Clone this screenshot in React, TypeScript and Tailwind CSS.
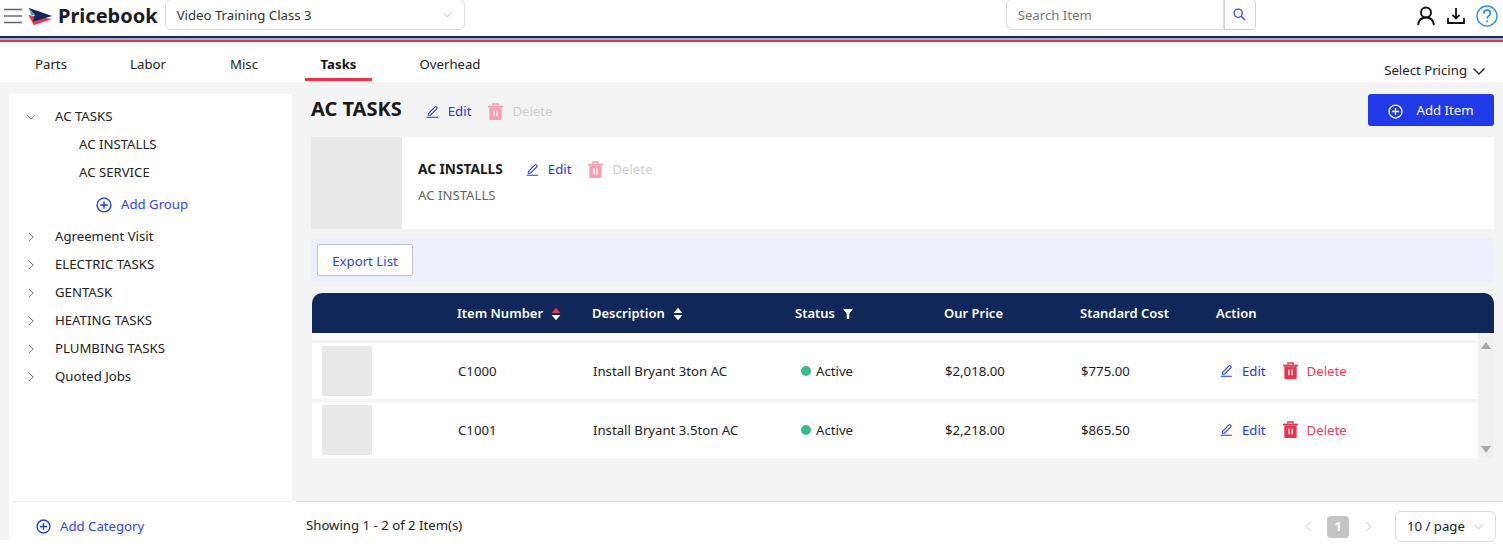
import React from "react";

const Pencil = ({ className = "" }: { className?: string }) => (
  <svg viewBox="0 0 14 14" className={"w-[13px] h-[13px] " + className} fill="none" stroke="#1f3ae6" strokeWidth="1.1">
    <path d="M2.6 9.2 9.6 2.1a1 1 0 0 1 1.5 0l.6.6a1 1 0 0 1 0 1.5L4.8 11H2.4z" strokeLinejoin="round" />
    <path d="M0.8 13.2h12" />
  </svg>
);

const Trash = ({ fill }: { fill: string }) => (
  <svg viewBox="0 0 14 16" className="w-[15px] h-[17px]">
    <path d="M4.5 2.5V1h5v1.5" fill="none" stroke={fill} strokeWidth="1.3" />
    <rect x="0" y="2.5" width="14" height="1.8" fill={fill} />
    <path fillRule="evenodd" d="M1.2 4.3h11.6V15a1 1 0 0 1-1 1H2.2a1 1 0 0 1-1-1zM5 7v5.500h1.300V7zM7.800 7v5.500h1.300V7z" fill={fill} />
  </svg>
);

const PlusCircle = ({ className = "", color = "#1f3ae6" }: { className?: string; color?: string }) => (
  <svg viewBox="0 0 16 16" className={className} fill="none" stroke={color} strokeWidth="1.4">
    <circle cx="8" cy="8" r="6.9" />
    <path d="M8 4.2v7.6M4.2 8h7.6" />
  </svg>
);

const Chevron = ({ dir, className = "", color = "#555", sw = 1.2 }: { dir: "down" | "right" | "left"; className?: string; color?: string; sw?: number }) => {
  const d = dir === "down" ? "M1.5 4.5 7 10l5.5-5.5" : dir === "right" ? "M4.5 1.5 10 7l-5.5 5.5" : "M9.5 1.5 4 7l5.5 5.5";
  return (
    <svg viewBox="0 0 14 14" className={className} fill="none" stroke={color} strokeWidth={sw}>
      <path d={d} />
    </svg>
  );
};

const Sorter = ({ up, down }: { up: string; down: string }) => (
  <svg viewBox="0 0 10 14" className="w-[10px] h-[14px] ml-[8px]">
    <path d="M5 0.8 9.4 6H0.6z" fill={up} />
    <path d="M5 13.2 9.4 8H0.6z" fill={down} />
  </svg>
);

const Tree = ({ open, label }: { open?: boolean; label: string }) => (
  <div className="flex items-center h-[28px]">
    <div className="w-[46px] pl-[17px]">
      <Chevron dir={open ? "down" : "right"} className="w-[10px] h-[10px]" />
    </div>
    <span>{label}</span>
  </div>
);

const columns = "grid grid-cols-[145px_135px_203px_149px_136px_136px_1fr]";

const Row = ({ num, desc, price, cost }: { num: string; desc: string; price: string; cost: string }) => (
  <div className={columns + " h-[56px] items-center bg-white text-[#222]"}>
    <div className="pl-[10px]">
      <div className="w-[50px] h-[50px] bg-[#e8e8e8]" />
    </div>
    <div className="pl-[1px] pt-[2px]">{num}</div>
    <div className="pl-[1px] pt-[2px]">{desc}</div>
    <div className="flex items-center pl-[6px]">
      <span className="w-[10px] h-[10px] rounded-full bg-[#35bb85] mr-[5px]" />
      <span className="pt-[2px]">Active</span>
    </div>
    <div className="pl-[1px] pt-[2px]">{price}</div>
    <div className="pl-[1px] pt-[2px]">{cost}</div>
    <div className="flex items-center pl-[4px]">
      <Pencil />
      <span className="ml-[9px] pt-[2px] text-[#2438e8]">Edit</span>
      <span className="ml-[17px]"><Trash fill="#e9344f" /></span>
      <span className="ml-[9px] pt-[2px] text-[#f0405a]">Delete</span>
    </div>
  </div>
);

const tabs: [string, string][] = [
  ["Parts", "w-[64px]"],
  ["Labor", "w-[70px]"],
  ["Misc", "w-[62px]"],
  ["Tasks", "w-[67px]"],
  ["Overhead", "w-[96px]"],
];

export default function App() {
  return (
    <div className="h-[551px] w-full flex flex-col overflow-hidden bg-white font-['Noto_Sans','Open_Sans',sans-serif] text-[13.2px] text-[#222]">
      <header className="h-[36px] flex items-center shrink-0 pb-[4px]">
        <svg viewBox="0 0 18 16" className="w-[18px] h-[16px] ml-[4px]" stroke="#666" strokeWidth="1.4">
          <path d="M0 1.5h18M0 8h18M0 14.5h18" />
        </svg>
        <svg viewBox="0 0 26 20" className="w-[25px] h-[20px] ml-[6px] mt-[1px]">
          <path d="M0.5 8 6 18.500 25 12z" fill="#f0364e" />
          <path d="M0.5 0.5 25 9 5 15 7 8z" fill="#10275a" />
          <path d="M0.5 0.5 7 8 3.500 8z" fill="#3ba0c8" />
        </svg>
        <span className="ml-[5px] text-[20px] font-bold text-[#1a1a2a] leading-none">Pricebook</span>
        <div className="ml-[7px] w-[300px] h-[31px] -mt-[3px] border border-[#dcdcdc] rounded-[6px] flex items-center justify-between pl-[11px] pr-[11px] text-[#333]">
          <span className="pt-[2px]">Video Training Class 3</span>
          <Chevron dir="down" className="w-[11px] h-[11px]" color="#bbb" />
        </div>
        <div className="ml-[541px] flex h-[31px] -mt-[3px]">
          <div className="w-[218px] border border-[#dcdcdc] rounded-l-[6px] pl-[11px] pt-[2px] flex items-center text-[#777]">Search Item</div>
          <div className="w-[32px] border border-[#d0d0d0] rounded-r-[4px] flex items-center justify-center">
            <svg viewBox="0 0 14 14" className="w-[13px] h-[13px]" fill="none" stroke="#2c4be0" strokeWidth="1.4">
              <circle cx="5.6" cy="5.6" r="4.4" />
              <path d="m8.800 8.800 4.200 4.200" />
            </svg>
          </div>
        </div>
        <svg viewBox="0 0 18 20" className="w-[18px] h-[20px] ml-[161px]" fill="none" stroke="#111" strokeWidth="1.9">
          <circle cx="9" cy="6.5" r="5" />
          <path d="M1 19c.6-4.500 3.600-7.500 8-7.500s7.400 3 8 7.500" />
        </svg>
        <svg viewBox="0 0 18 16" className="w-[18px] h-[16px] ml-[12px]" fill="none" stroke="#111" strokeWidth="1.8">
          <path d="M9 0v10M5.500 6.800 9 10.500l3.500-3.700M1 10v5h16v-5" />
        </svg>
        <svg viewBox="0 0 22 22" className="w-[22px] h-[22px] ml-[11px]" fill="none" stroke="#2f8ff0" strokeWidth="1.4">
          <circle cx="11" cy="11" r="10" />
          <path d="M7.800 8.500c0-2 1.400-3.300 3.300-3.300s3.200 1.300 3.200 3c0 2.600-3.200 2.600-3.200 5.200" strokeWidth="1.700" />
          <circle cx="11.100" cy="16.300" r="1" fill="#2f8ff0" stroke="none" />
        </svg>
      </header>

      <div className="shrink-0 h-[6px] flex flex-col">
        <div className="h-[2px] bg-[#10275a]" />
        <div className="h-[2px] bg-[#9cb4c4]" />
        <div className="h-[2px] bg-[#e8344e]" />
      </div>

      <nav className="h-[40px] shrink-0 flex pl-[19px] gap-[30px] text-[#222]">
        {tabs.map(([t, w]) => (
          <div
            key={t}
            className={
              w +
              " h-[39px] pt-[10px] flex items-center justify-center " +
              (t === "Tasks" ? "font-bold border-b-[3px] border-[#f0304a] text-[#111]" : "border-b-[3px] border-transparent")
            }
          >
            {t}
          </div>
        ))}
        <div className="ml-auto mr-[17px] mt-[20px] flex items-center h-[18px] text-[#222]">
          Select Pricing
          <Chevron dir="down" className="w-[14px] h-[14px] ml-[5px]" color="#222" sw={1.3} />
        </div>
      </nav>

      <div className="h-[469px] shrink-0 flex bg-white">
        <div className="w-[292px] h-[458px] shrink-0 bg-[#f4f4f4] pl-[9px] pt-[12px] flex">
          <aside className="flex-1 bg-white flex flex-col">
            <div className="pt-[9px] flex-1">
              <Tree open label="AC TASKS" />
              <div className="pl-[70px] h-[28px] flex items-center">AC INSTALLS</div>
              <div className="pl-[70px] h-[28px] flex items-center">AC SERVICE</div>
              <div className="pl-[87px] h-[36px] flex items-center text-[#2f49e8]">
                <PlusCircle className="w-[16px] h-[16px] mr-[9px]" />
                Add Group
              </div>
              {["Agreement Visit", "ELECTRIC TASKS", "GENTASK", "HEATING TASKS", "PLUMBING TASKS", "Quoted Jobs"].map((t) => (
                <Tree key={t} label={t} />
              ))}
            </div>
            <div className="ml-[3px] h-[39px] pt-[11px] border-t border-[#ececec] flex items-center pl-[24px] text-[#2f49e8]">
              <PlusCircle className="w-[15px] h-[15px] mr-[9px]" />
              Add Category
            </div>
          </aside>
        </div>

        <main className="flex-1 flex flex-col min-w-0 bg-[#f4f4f4]">
          <div className="flex-1 pt-[12px] pl-[19px] pr-[9px] flex flex-col">
            <div className="h-[32px] flex items-center">
              <h1 className="text-[20px] font-bold text-[#1a1a1a] -mt-[2px]">AC TASKS</h1>
              <span className="ml-[24px] pt-[3px]"><Pencil /></span>
              <span className="ml-[9px] pt-[4px] text-[#2438e8]">Edit</span>
              <span className="ml-[17px] pt-[2px]"><Trash fill="#f4a0ae" /></span>
              <span className="ml-[9px] pt-[4px] text-[#cfcfcf]">Delete</span>
              <button className="ml-auto w-[126px] h-[32px] pt-[2px] rounded-[3px] bg-[#1f3ae6] text-white flex items-center justify-center">
                <PlusCircle className="w-[15px] h-[15px] mr-[13px]" color="#fff" />
                Add Item
              </button>
            </div>
            <div className="mt-[11px] h-[92px] bg-white flex items-stretch">
              <div className="w-[91px] bg-[#e8e8e8]" />
              <div className="pl-[16px] pt-[22px]">
                <div className="flex items-center h-[20px]">
                  <span className="font-bold text-[13.7px] text-[#1a1a1a]">AC INSTALLS</span>
                  <span className="ml-[23px]"><Pencil /></span>
                  <span className="ml-[9px] pt-[1px] text-[#2438e8]">Edit</span>
                  <span className="ml-[17px]"><Trash fill="#f4a0ae" /></span>
                  <span className="ml-[9px] pt-[1px] text-[#cfcfcf]">Delete</span>
                </div>
                <div className="mt-[7px] text-[#666]">AC INSTALLS</div>
              </div>
            </div>
            <div className="mt-[9px] h-[44px] bg-[#ecf0fd] rounded-[4px] flex items-center pl-[6px]">
              <button className="w-[96px] h-[32px] pt-[4px] bg-white border border-[#c4c4c4] rounded-[2px] text-[#2f3fe0]">Export List</button>
            </div>
            <div className="mt-[11px] ml-[1px] flex flex-col">
              <div className={columns + " h-[40px] pt-[2px] items-center bg-[#10275a] rounded-t-[10px] text-white text-[13px] font-semibold"}>
                <div />
                <div className="flex items-center">Item Number<Sorter up="#ef3350" down="#fff" /></div>
                <div className="flex items-center">Description<Sorter up="#fff" down="#fff" /></div>
                <div className="flex items-center">
                  Status
                  <svg viewBox="0 0 10 10" className="w-[10px] h-[10px] ml-[8px]" fill="#fff">
                    <path d="M0 0h10L6.300 4.500V10H3.700V4.500z" />
                  </svg>
                </div>
                <div>Our Price</div>
                <div>Standard Cost</div>
                <div>Action</div>
              </div>
              <div className="flex">
                <div className="flex-1 min-w-0 flex flex-col">
                  <div className="h-[7px] bg-white" />
                  <div className="h-[3px]" />
                  <Row num="C1000" desc="Install Bryant 3ton AC" price="$2,018.00" cost="$775.00" />
                  <div className="h-[3px]" />
                  <Row num="C1001" desc="Install Bryant 3.5ton AC" price="$2,218.00" cost="$865.50" />
                </div>
                <div className="w-[16px] bg-[#f0f0f0] flex flex-col items-center justify-between pt-[9px] pb-[5px]">
                  <svg viewBox="0 0 10 7" className="w-[10px] h-[7px]"><path d="M5 0l5 7H0z" fill="#a8a8a8" /></svg>
                  <svg viewBox="0 0 10 7" className="w-[10px] h-[7px]"><path d="M5 7l5-7H0z" fill="#a8a8a8" /></svg>
                </div>
              </div>
            </div>
          </div>
          <div className="h-[50px] bg-white pl-[4px]">
            <div className="h-full border-t border-[#d9d9d9] flex items-center pl-[10px] pr-[7px]">
              <span className="pb-[2px]">Showing 1 - 2 of 2 Item(s)</span>
              <Chevron dir="left" className="w-[11px] h-[11px] ml-auto" color="#bbb" />
              <span className="ml-[13px] w-[22px] h-[22px] rounded-[4px] bg-[#c4c4c4] text-white font-bold flex items-center justify-center">1</span>
              <Chevron dir="right" className="w-[11px] h-[11px] ml-[14px]" color="#bbb" />
              <div className="ml-[21px] w-[101px] h-[31px] border border-[#dcdcdc] rounded-[6px] flex items-center justify-between pl-[11px] pr-[11px]">
                <span>10 / page</span>
                <Chevron dir="down" className="w-[11px] h-[11px]" color="#bbb" />
              </div>
            </div>
          </div>
        </main>
      </div>
    </div>
  );
}
